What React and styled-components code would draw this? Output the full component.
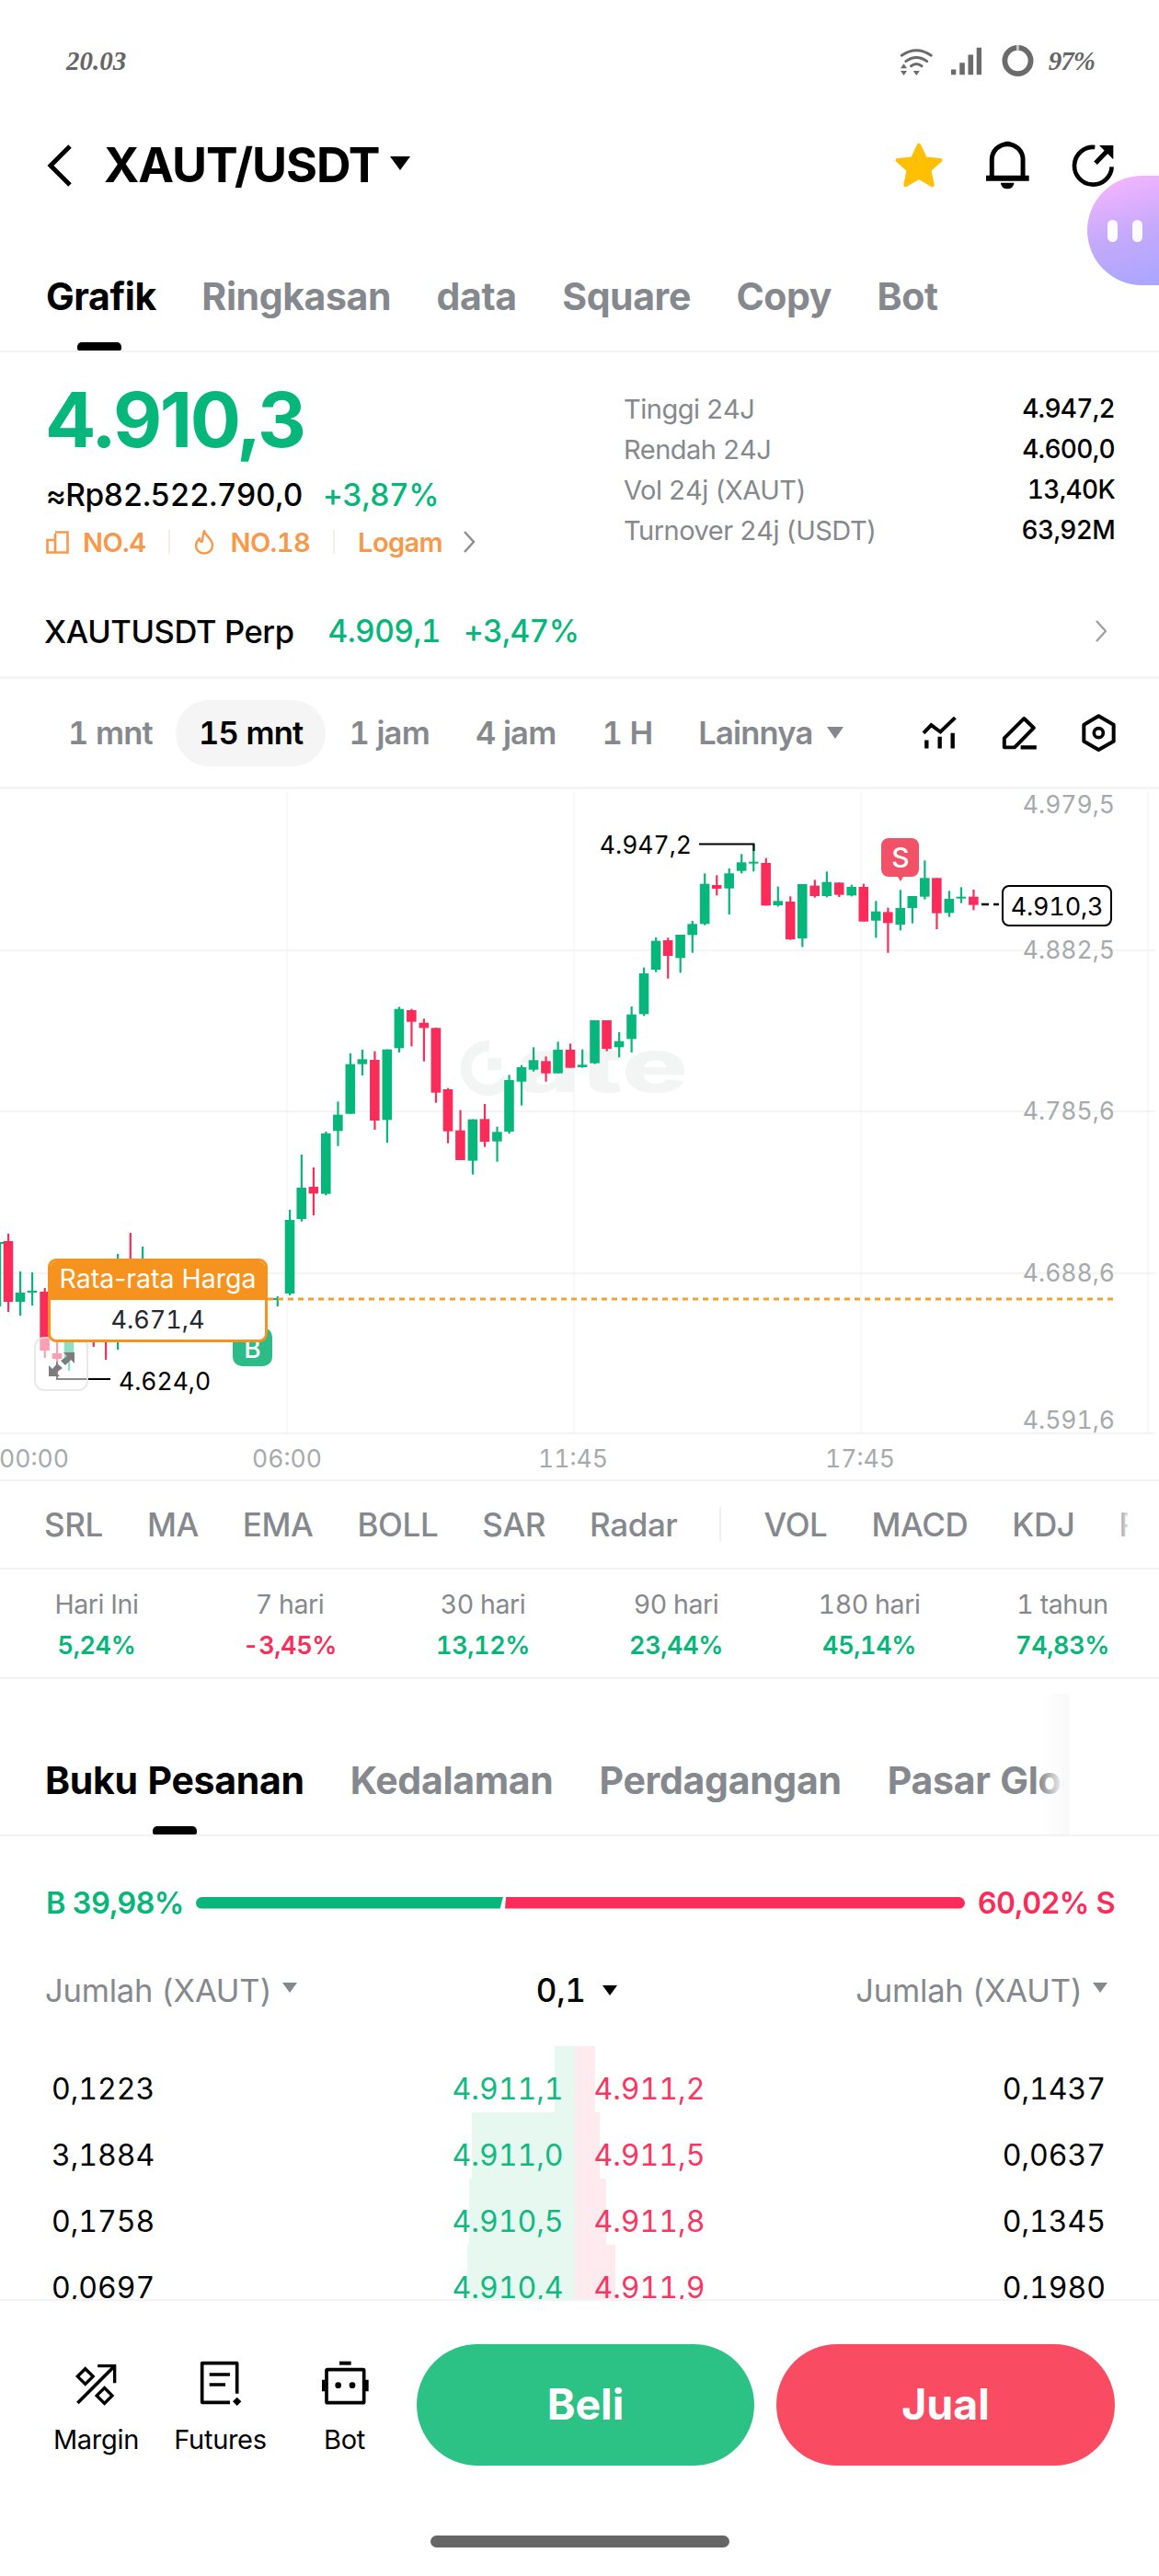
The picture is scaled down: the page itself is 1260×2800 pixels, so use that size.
import React from "react";
import styled, { createGlobalStyle } from "styled-components";

const GREEN = "#06b67a";
const RED = "#f92c5a";
const GREY = "#85898d";
const ORANGE = "#f7994b";

const Global = createGlobalStyle`
  html, body { margin: 0; padding: 0; background: #fff; }
  * { box-sizing: border-box; }
  body { font-family: Inter, "Liberation Sans", sans-serif; color: #000; font-variant-numeric: tabular-nums; }
`;

const Page = styled.div`
  position: relative;
  width: 1260px;
  height: 2800px;
  overflow: hidden;
  background: #fff;
`;

/* status bar */
const StatusBar = styled.div`
  height: 132px;
  padding: 0 72px;
  display: flex;
  align-items: center;
  justify-content: space-between;
  font-family: "Liberation Serif", serif;
  font-style: italic;
  font-weight: 700;
  font-size: 29px;
  color: #666;
`;
const StatusIcons = styled.div`
  display: flex;
  align-items: center;
  width: 212px;
  margin-right: -2px;
  span { margin-left: 16px; letter-spacing: -1px; }
`;

/* header */
const Header = styled.div`
  height: 96px;
  display: flex;
  align-items: center;
  padding: 0 48px 0 50px;
`;
const Title = styled.div`
  margin-left: 33px;
  font-size: 52px;
  font-weight: 700;
  letter-spacing: -1.1px;
  line-height: 60px;
`;
const HeaderIcons = styled.div`
  margin-left: auto;
  margin-top: -2px;
  display: flex;
  align-items: center;
  gap: 45px;
`;
const Bubble = styled.div`
  position: absolute;
  right: 0;
  top: 191px;
  width: 78px;
  height: 119px;
  border-radius: 60px 0 0 60px;
  background: linear-gradient(165deg, #fbb7ff 0%, #c4a9fb 55%, #a9a6ff 100%);
  display: flex;
  align-items: center;
  gap: 16px;
  padding-left: 22px;
  i { display: block; width: 11px; height: 24px; border-radius: 6px; background: #fff; opacity: .95; }
`;

/* tabs */
const TabBar = styled.div`
  position: relative;
  height: ${p => p.$h}px;
  padding: ${p => p.$top}px 0 0 ${p => p.$left}px;
  display: flex;
  gap: ${p => p.$gap}px;
  border-bottom: 2px solid #f2f2f2;
  font-weight: 700;
  font-size: ${p => p.$size}px;
  letter-spacing: ${p => p.$ls}px;
  line-height: 48px;
  color: ${GREY};
  white-space: nowrap;
  overflow: hidden;
`;
const TabItem = styled.div`
  color: ${p => (p.$active ? "#000" : GREY)};
`;
const TabMark = styled.div`
  position: absolute;
  left: ${p => p.$left}px;
  bottom: 0;
  width: 48px;
  height: 9px;
  border-radius: 5px 5px 2px 2px;
  background: #000;
`;
const TabFade = styled.div`
  position: absolute;
  left: 1130px;
  top: 16px;
  bottom: 0;
  width: 130px;
  background: linear-gradient(90deg, rgba(250,250,250,0) 0, #fafafa 27px, #f9f9f9 32px, #fff 33px);
`;

/* summary */
const Summary = styled.div`
  height: 257px;
  padding: 0 48px 0 50px;
  display: flex;
  justify-content: space-between;
`;
const LeftCol = styled.div`
  display: flex;
  flex-direction: column;
`;
const BigPrice = styled.div`
  margin: 29px 0 0 -1px;
  font-size: 82px;
  line-height: 90px;
  font-weight: 700;
  letter-spacing: -2.5px;
  font-variant-numeric: normal;
  color: ${GREEN};
`;
const FiatRow = styled.div`
  margin-top: 14px;
  display: flex;
  gap: 22px;
  font-size: 33.5px;
  line-height: 44px;
  font-weight: 500;
  letter-spacing: -.5px;
`;
const Up = styled.span`
  color: ${GREEN};
`;
const RankRow = styled.div`
  margin-top: 9px;
  display: flex;
  align-items: center;
  height: 40px;
  font-size: 29px;
  font-weight: 600;
  letter-spacing: -.6px;
  color: ${ORANGE};
`;
const RankSep = styled.i`
  width: 2px;
  height: 26px;
  margin: 0 25px;
  background: #f6eee6;
`;
const RankLabel = styled.span`
  display: flex;
  margin-left: ${p => p.$ml || 0}px;
`;
const StatsCol = styled.div`
  width: 534px;
  padding-top: 39px;
`;
const StatRow = styled.div`
  height: 44px;
  display: flex;
  justify-content: space-between;
  align-items: center;
  font-size: 29px;
  letter-spacing: -.5px;
  color: ${GREY};
  b { font-weight: 500; color: #000; font-size: 28px; letter-spacing: -.7px; }
`;

const PerpRow = styled.div`
  height: 98px;
  padding: 0 56px 3px 48px;
  display: flex;
  align-items: center;
  border-bottom: 3px solid #f4f4f4;
  font-size: 33.5px;
  font-weight: 500;
  letter-spacing: -.6px;
`;
const PerpName = styled.span`
  font-size: 34.5px;
  letter-spacing: -.4px;
`;
const PerpPrice = styled.span`
  margin-left: ${p => p.$ml}px;
  color: ${GREEN};
`;
const PushRight = styled.div`
  margin-left: auto;
  display: flex;
`;

/* intervals */
const IntervalRow = styled.div`
  height: 120px;
  padding: 0 47px 0 49px;
  display: flex;
  align-items: center;
  border-bottom: 3px solid #f4f4f4;
  font-size: 34.5px;
  font-weight: 600;
  letter-spacing: -.8px;
  color: ${GREY};
`;
const Interval = styled.div`
  height: 72px;
  padding: 0 25px;
  line-height: 72px;
  border-radius: 36px;
  white-space: nowrap;
  background: ${p => (p.$active ? "#f5f5f5" : "transparent")};
  color: ${p => (p.$active ? "#000" : "inherit")};
`;
const Caret = styled.i`
  display: inline-block;
  width: 0;
  height: 0;
  margin-left: ${p => p.$ml}px;
  border-left: ${p => p.$s}px solid transparent;
  border-right: ${p => p.$s}px solid transparent;
  border-top: ${p => p.$s * 1.45}px solid ${p => p.$c};
  vertical-align: middle;
  position: relative;
  top: -3px;
`;
const ToolIcons = styled.div`
  margin-left: auto;
  display: flex;
  align-items: center;
  gap: 49px;
`;

/* chart */
const ChartWrap = styled.div`
  position: relative;
  height: 752px;
  border-bottom: 2px solid #f2f2f2;
  svg { display: block; }
`;
const AvgBox = styled.div`
  position: absolute;
  left: 52px;
  top: 510px;
  width: 239px;
  height: 91px;
  border: 3px solid #f6931e;
  border-radius: 9px;
  background: #fff;
  overflow: hidden;
  text-align: center;
`;
const AvgHead = styled.div`
  height: 43px;
  margin: -1px -1px 0;
  background: #f6931e;
  color: #fff;
  font-size: 28.5px;
  line-height: 40px;
  white-space: nowrap;
  font-variant-numeric: normal;
`;
const AvgVal = styled.div`
  font-size: 27px;
  line-height: 44px;
  color: #24292f;
`;
const BuyMark = styled.div`
  position: absolute;
  left: 253px;
  top: 585px;
  width: 43px;
  height: 42px;
  border-radius: 10px;
  background: #2dbb87;
  color: #fff;
  font-size: 28px;
  font-weight: 500;
  text-align: center;
  line-height: 46px;
`;
const ExpandBtn = styled.div`
  position: absolute;
  left: 37px;
  top: 595px;
  width: 59px;
  height: 59px;
  border: 2px solid rgba(225,225,225,.75);
  border-radius: 11px;
  background: rgba(255,255,255,.55);
  display: flex;
  align-items: center;
  justify-content: center;
`;
const NowBox = styled.div`
  position: absolute;
  left: 1089px;
  top: 104px;
  width: 120px;
  height: 45px;
  border: 2px solid #000;
  border-radius: 8px;
  background: #fff;
  font-size: 27px;
  letter-spacing: -.2px;
  line-height: 43px;
  text-align: center;
`;

/* indicators */
const IndicatorRow = styled.div`
  position: relative;
  height: 96px;
  padding-left: 48px;
  display: flex;
  align-items: center;
  gap: 48px;
  border-bottom: 2px solid #f2f2f2;
  font-size: 35px;
  font-weight: 500;
  letter-spacing: -.4px;
  color: ${GREY};
  white-space: nowrap;
  overflow: hidden;
  span { flex: none; }
`;
const IndicatorSep = styled.i`
  flex: 0 0 2px;
  height: 38px;
  margin: 0 -1px 0 -3px;
  background: #f0f0f0;
`;
const IndicatorFade = styled.div`
  position: absolute;
  left: 1226px;
  right: 0;
  top: 0;
  bottom: 0;
  background: #fff;
  box-shadow: -6px 0 6px rgba(255,255,255,.7);
`;

/* performance */
const PerfGrid = styled.div`
  height: 119px;
  display: grid;
  grid-template-columns: repeat(6, 210px);
  border-bottom: 2px solid #f2f2f2;
  padding-top: 20px;
  text-align: center;
`;
const PerfLabel = styled.div`
  font-size: 28.5px;
  line-height: 36px;
  color: ${GREY};
  letter-spacing: -.4px;
`;
const PerfValue = styled.div`
  margin-top: 9px;
  font-size: 27px;
  line-height: 36px;
  font-weight: 600;
  letter-spacing: -.4px;
  color: ${p => (p.$down ? RED : GREEN)};
`;

/* book */
const RatioRow = styled.div`
  height: 72px;
  margin-top: 36px;
  padding: 0 48px 0 50px;
  display: flex;
  align-items: center;
  font-size: 32.5px;
  font-weight: 600;
  letter-spacing: -.75px;
`;
const RatioSide = styled.span`
  flex: 0 0 150px;
  color: ${p => p.$c};
  white-space: nowrap;
  text-align: ${p => p.$align};
`;
const RatioBar = styled.div`
  flex: 1;
  height: 13px;
  margin: 0 13px 0 13px;
  display: flex;
  gap: 2px;
`;
const RatioBuy = styled.i`
  flex: 0 0 334px;
  background: ${GREEN};
  border-radius: 7px 0 0 7px;
  clip-path: polygon(0 0, 100% 0, 99% 100%, 0 100%);
`;
const RatioSell = styled.i`
  flex: 1;
  background: ${RED};
  border-radius: 0 7px 7px 0;
  clip-path: polygon(1px 0, 100% 0, 100% 100%, 0 100%);
`;
const BookHead = styled.div`
  height: 46px;
  margin-top: 36px;
  padding: 0 56px 0 49px;
  display: flex;
  align-items: center;
  font-size: 34.5px;
  letter-spacing: -.2px;
  color: ${GREY};
  white-space: nowrap;
`;
const BookMid = styled.span`
  margin-left: 260px;
  margin-right: auto;
  color: #000;
  font-weight: 500;
  font-size: 35px;
`;
const BookBody = styled.div`
  height: 313px;
  padding-top: 48px;
  overflow: hidden;
`;
const BookRow = styled.div`
  position: relative;
  height: 72px;
  padding: 0 58px 0 56px;
  display: flex;
  align-items: center;
  gap: 33px;
  font-size: 32px;
`;
const Depth = styled.i`
  position: absolute;
  top: -10px;
  height: 72px;
  left: ${p => p.$l}px;
  width: ${p => p.$w}px;
  background: ${p => p.$c};
`;
const Half = styled.div`
  position: relative;
  flex: 1;
  display: flex;
  justify-content: space-between;
`;
const Price = styled.span`
  color: ${p => p.$c};
  opacity: .95;
`;

/* footer */
const Footer = styled.div`
  height: 300px;
  border-top: 2px solid #f4f4f4;
  padding-top: 47px;
  display: flex;
  flex-direction: column;
`;
const ActionRow = styled.div`
  padding: 0 48px 0 37px;
  display: flex;
  height: 132px;
`;
const NavItem = styled.div`
  width: 135px;
  padding-top: 17px;
  display: flex;
  flex-direction: column;
  align-items: center;
  font-size: 29px;
  letter-spacing: -.3px;
  svg { display: block; }
`;
const NavIcon = styled.div`
  height: 50px;
  display: flex;
  align-items: flex-end;
`;
const NavLabel = styled.div`
  margin-top: 19px;
  line-height: 36px;
`;
const Action = styled.div`
  width: ${p => p.$w}px;
  margin-left: ${p => p.$ml}px;
  height: 132px;
  border-radius: 66px;
  background: ${p => p.$c};
  color: #fff;
  font-size: 46.5px;
  font-weight: 700;
  text-align: center;
  line-height: 130px;
`;
const HomeBar = styled.div`
  align-self: center;
  width: 325px;
  height: 13px;
  margin-top: 76px;
  border-radius: 7px;
  background: #666;
`;

/* icons, drawn in the coordinates of the reference crop */
const Ic = ({ w, h, box, children, style }) => (
  <svg width={w} height={h} viewBox={box} fill="none" style={style}>{children}</svg>
);

const StatusGlyphs = () => (
  <>
    <Ic w={37} h={32} box="112 58 110 100">
      <g stroke="#6b6b6b" strokeWidth="9" strokeLinecap="round">
        <path d="M118 90 Q168 56 218 90" />
        <path d="M132 110 Q168 84 204 110" />
        <path d="M150 126 Q168 112 186 126" />
      </g>
      <path d="M114 134H136L125 118ZM114 142H136L125 158ZM157 142H179L168 158Z" fill="#6b6b6b" />
    </Ic>
    <Ic w={34} h={31} box="280 66 100 94" style={{ marginLeft: 20 }}>
      <path d="M280 140h16v18h-16zM308 118h17v40h-17zM336 92h17v66h-17zM364 68h16v90h-16z" fill="#6b6b6b" />
    </Ic>
    <Ic w={36} h={36} box="0 0 36 36" style={{ marginLeft: 22 }}>
      <circle cx="18" cy="18" r="14.5" stroke="#6b6b6b" strokeWidth="6" />
      <path d="M16.4 0.5h3v6h-3z" fill="#c8c8c8" />
    </Ic>
  </>
);

const Back = () => (
  <Ic w={30} h={48} box="0 0 30 48">
    <path d="M26 3 L5 24 L26 45" stroke="#000" strokeWidth="5" strokeLinecap="butt" />
  </Ic>
);
const Star = () => (
  <Ic w={54} h={51} box="30 68 160 154">
    <path d="M110 80 L131 124 L180 129 L144 161 L154 210 L110 185 L66 210 L76 161 L40 129 L89 124Z" fill="#febf05" stroke="#febf05" strokeWidth="13" strokeLinejoin="round" />
  </Ic>
);
const Bell = () => (
  <Ic w={49} h={53} box="326 66 146 160">
    <path d="M347 188 V128 a51 51 0 0 1 102 0 V188" stroke="#000" strokeWidth="15" />
    <path d="M328 189H469" stroke="#000" strokeWidth="18" />
    <rect x="388" y="68" width="21" height="14" rx="6" fill="#000" />
    <path d="M376 204 h44 a22 20 0 0 1 -44 0Z" fill="#000" />
  </Ic>
);
const Share = () => (
  <Ic w={47} h={47} box="616 80 141 141">
    <path d="M692 92 A61 61 0 1 0 747 156" stroke="#000" strokeWidth="14" />
    <path d="M694 144 L738 98" stroke="#000" strokeWidth="15" />
    <path d="M706 86 H752 V132 Z" fill="#000" />
  </Ic>
);
const ChartTool = () => (
  <Ic w={38} h={37} box="124 54 114 110">
    <path d="M130 110 L155 84 L185 106 L233 60" stroke="#000" strokeWidth="12" />
    <path d="M140 133V160M183 122V160M225 110V160" stroke="#000" strokeWidth="13" />
  </Ic>
);
const PenTool = () => (
  <Ic w={38} h={37} box="386 50 114 112">
    <path d="M394 124 L459 59 L491 90 L428 154 H394Z" stroke="#000" strokeWidth="12" strokeLinejoin="round" />
    <path d="M448 154H500" stroke="#000" strokeWidth="13" />
  </Ic>
);
const HexTool = () => (
  <Ic w={37} h={41} box="648 50 111 123">
    <path d="M703 57 L752 85 V139 L703 167 L655 139 V85Z" stroke="#000" strokeWidth="12" strokeLinejoin="round" />
    <circle cx="703" cy="112" r="15" stroke="#000" strokeWidth="11" />
  </Ic>
);
const Chevron = ({ c, w, h, sw }) => (
  <Ic w={w} h={h} box="0 0 14 24">
    <path d="M2 1 L12 12 L2 23" stroke={c} strokeWidth={sw} />
  </Ic>
);
const RankIcon = () => (
  <Ic w={25} h={25} box="0 0 25 25">
    <path d="M1.5 10H10V23.5H1.5ZM10 3V23.5H23.5V1.5H10" stroke={ORANGE} strokeWidth="2.6" />
  </Ic>
);
const Flame = () => (
  <Ic w={24} h={28} box="0 0 24 28">
    <path d="M12 2 C13 8 21 10 21 18 A9 8.5 0 0 1 3 18 C3 14 5 12 7 10 C7 13 8 14 9.5 14 C11 10 10 6 12 2Z" stroke={ORANGE} strokeWidth="2.4" strokeLinejoin="round" />
  </Ic>
);
const MarginIcon = () => (
  <Ic w={47} h={47} box="235 260 140 140">
    <path d="M245 391 L364 272" stroke="#000" strokeWidth="11" />
    <path d="M310 271 H365 V326" stroke="#000" strokeWidth="10" />
    <path d="M270 280 L295 305 L270 330 L245 305Z M332 342 L357 367 L332 392 L307 367Z" stroke="#000" strokeWidth="10" />
  </Ic>
);
const FuturesIcon = () => (
  <Ic w={50} h={50} box="640 252 150 150">
    <path d="M768 362 V263 H654 V391 H745" stroke="#000" strokeWidth="11" strokeLinejoin="round" />
    <path d="M678 300H745M678 333H730" stroke="#000" strokeWidth="11" />
    <path d="M768 374 L782 388 L768 402 L754 388Z" fill="#000" />
  </Ic>
);
const BotIcon = () => (
  <Ic w={52} h={50} box="1040 252 156 150">
    <rect x="1058" y="284" width="122" height="108" rx="3" stroke="#000" strokeWidth="11" />
    <path d="M1100 263H1138" stroke="#000" strokeWidth="12" />
    <path d="M1043 317h11v38h-11zM1184 317h11v38h-11z" fill="#000" />
    <circle cx="1096" cy="335" r="10" fill="#000" />
    <circle cx="1142" cy="335" r="10" fill="#000" />
  </Ic>
);
const ExpandIcon = () => (
  <Ic w={34} h={34} box="0 0 34 34">
    <path d="M19 4H31V16L27 12L21 18L16 13L23 8ZM15 30H3V18L7 22L12 16L18 21L11 26Z" fill="#7c7c7c" />
  </Ic>
);

/* chart data: [x, wick top, body top, body bottom, wick bottom, up] as read from the reference */
const crop3 = [
  [803,1185,1293,1395,1403,1],[835,1227,1290,1312,1383,0],[868,1110,1116,1313,1318,1],[900,1012,1055,1108,1157,1],
  [933,855,890,1052,1052,1],[965,843,874,890,927,1],[998,848,876,1074,1104,0],[1031,842,842,1072,1146,1],
  [1063,703,710,838,852,1],[1096,710,714,752,832,0],[1129,742,755,772,881,0],[1161,772,772,983,1016,0],
  [1193,968,972,1109,1148,0],[1226,1040,1106,1203,1203,0],[1259,1070,1070,1205,1250,1],[1291,1020,1069,1143,1160,0],
  [1324,1094,1111,1142,1208,1],[1356,925,942,1110,1117,1],[1389,893,900,947,1025,1],[1421,835,877,908,914,1],
  [1454,865,880,920,947,0],[1486,817,843,920,920,1],[1519,823,843,902,902,0],[1551,842,892,900,902,1],
];
const crop4 = [
  [65,747,747,887,890,1],[97,747,747,840,848,0],[130,786,815,835,868,1],[163,702,728,808,852,1],
  [196,575,594,727,733,1],[228,477,488,582,590,1],[260,478,486,537,611,0],[293,468,468,544,592,1],
  [325,423,433,469,527,1],[358,268,302,433,437,1],[390,274,306,318,340,0],[423,252,268,317,402,1],
  [456,205,232,260,268,1],[488,172,230,235,262,1],[521,218,234,373,373,0],[553,311,358,372,376,1],
  [586,343,360,483,485,0],[618,303,303,480,508,1],[651,289,308,342,347,0],[683,262,296,342,346,1],
  [716,298,298,338,345,0],[749,305,312,340,343,1],[781,302,312,425,425,0],[814,358,392,422,478,1],
  [846,380,394,430,527,0],[879,322,381,435,454,1],[911,342,342,381,431,1],[944,226,283,344,353,1],
  [976,283,283,398,450,0],[1009,325,351,397,410,1],[1041,313,344,349,365,1],[1074,321,344,371,388,0],
];
const left = [
  [0,1350,1350,1350,1420,1],[9,1341,1349,1415,1426,0],[22,1382,1405,1415,1430,1],[35,1383,1403,1405,1419,1],
  [48.6,1400,1404,1468,1476,0],[62,1440,1471,1477,1499,0],[75,1440,1450,1477,1490,1],[101.7,1420,1430,1440,1464,0],
  [115,1420,1430,1445,1478,0],[128,1363,1380,1440,1467,1],[141.7,1340,1380,1400,1420,0],[155,1355,1380,1400,1420,1],
  [301.7,1409,1411,1413,1420,1],[315,1315,1326,1406,1408,1],
];
const candles = [
  ...left,
  ...crop3.map(([x, a, b, c, d, u]) => [x / 2.45, 860 + a / 3, 860 + b / 3, 860 + c / 3, 860 + d / 3, u]),
  ...crop4.map(([x, a, b, c, d, u]) => [620 + x / 2.45, 860 + a / 3, 860 + b / 3, 860 + c / 3, 860 + d / 3, u]),
];

const AxisText = styled.text`
  font-family: Inter, "Liberation Sans", sans-serif;
  font-size: 26.5px;
  fill: ${p => p.$c};
  font-variant-numeric: tabular-nums;
  dominant-baseline: central;
`;
const BadgeText = styled.text`
  font-family: Inter, "Liberation Sans", sans-serif;
  font-size: 30px;
  font-weight: 500;
  fill: #fff;
  dominant-baseline: central;
`;
const Watermark = styled.text`
  font-family: Inter, "Liberation Sans", sans-serif;
  font-size: 82px;
  font-weight: 800;
  fill: #f3f4f4;
`;

const Chart = () => (
  <ChartWrap>
    <svg width="1260" height="750" viewBox="0 858 1260 750">
      {[312, 624, 936, 1248].map(x => <path key={x} d={`M${x} 861V1558`} stroke="#f8f8f8" strokeWidth="2" />)}
      {[1033, 1208, 1384, 1558].map(y => <path key={y} d={`M0 ${y}H1256`} stroke="#f4f4f4" strokeWidth="2" />)}
      <g>
        <path d="M532 1137 A24 24 0 1 0 552 1172" stroke="#f3f4f4" strokeWidth="12" fill="none" />
        <path d="M530 1150h15v13h-15z" fill="#f3f4f4" />
        <Watermark x="560" y="1187" textLength="188" lengthAdjust="spacingAndGlyphs">ate</Watermark>
      </g>
      {candles.map(([x, a, b, c, d, u], i) => (
        <g key={i} fill={u ? GREEN : RED}>
          <rect x={x - 1} y={a} width="2.2" height={d - a} />
          <rect x={x - 5.3} y={b} width="10.6" height={Math.max(c - b, 2)} />
        </g>
      ))}
      <path d="M291 1412H1212" stroke="#f3a033" strokeWidth="3" strokeDasharray="6 5" />
      <path d="M760 917.5H819.5V925" stroke="#000" strokeWidth="2" fill="none" />
      <path d="M62 1480V1499H120" stroke="#000" strokeWidth="2" fill="none" />
      <path d="M1067 983H1075M1080 983H1086" stroke="#000" strokeWidth="2.4" />
      <path d="M966 911h25a8 8 0 0 1 8 8v26a8 8 0 0 1 -8 8h-9l-3 5l-3 -5h-10a8 8 0 0 1 -8 -8v-26a8 8 0 0 1 8 -8Z" fill="#f25267" />
      <BadgeText x="979" y="932" textAnchor="middle">S</BadgeText>
      <AxisText x="752" y="918" $c="#000" textAnchor="end">4.947,2</AxisText>
      <AxisText x="129" y="1501" $c="#000">4.624,0</AxisText>
      {[["4.979,5", 874], ["4.882,5", 1032], ["4.785,6", 1207], ["4.688,6", 1383], ["4.591,6", 1543]].map(([t, y]) => (
        <AxisText key={t} x="1212" y={y} $c="#a6aaad" textAnchor="end">{t}</AxisText>
      ))}
      {[["00:00", 37], ["06:00", 312], ["11:45", 623], ["17:45", 935]].map(([t, x]) => (
        <AxisText key={t} x={x} y="1585" $c="#a6aaad" textAnchor="middle">{t}</AxisText>
      ))}
    </svg>
    <BuyMark>B</BuyMark>
    <ExpandBtn><ExpandIcon /></ExpandBtn>
    <AvgBox>
      <AvgHead>Rata-rata Harga</AvgHead>
      <AvgVal>4.671,4</AvgVal>
    </AvgBox>
    <NowBox>4.910,3</NowBox>
  </ChartWrap>
);

const stats = [["Tinggi 24J", "4.947,2"], ["Rendah 24J", "4.600,0"], ["Vol 24j (XAUT)", "13,40K"], ["Turnover 24j (USDT)", "63,92M"]];
const perf = [["Hari Ini", "5,24%"], ["7 hari", "-3,45%", 1], ["30 hari", "13,12%"], ["90 hari", "23,44%"], ["180 hari", "45,14%"], ["1 tahun", "74,83%"]];
const book = [
  ["0,1223", "4.911,1", "4.911,2", "0,1437", 603, 647],
  ["3,1884", "4.911,0", "4.911,5", "0,0637", 513, 652],
  ["0,1758", "4.910,5", "4.911,8", "0,1345", 510, 659],
  ["0,0697", "4.910,4", "4.911,9", "0,1980", 508, 669],
];

export default function App() {
  return (
    <Page>
      <Global />
      <StatusBar>
        <span>20.03</span>
        <StatusIcons><StatusGlyphs /><span>97%</span></StatusIcons>
      </StatusBar>
      <Header>
        <Back />
        <Title>XAUT/USDT</Title>
        <Caret $s={11} $c="#000" $ml={12} />
        <HeaderIcons><Star /><Bell /><Share /></HeaderIcons>
      </Header>
      <Bubble><i /><i /></Bubble>

      <TabBar $h={155} $top={70} $left={50} $gap={49.5} $size={41} $ls={-.4}>
        <TabItem $active>Grafik</TabItem>
        <TabItem>Ringkasan</TabItem>
        <TabItem>data</TabItem>
        <TabItem>Square</TabItem>
        <TabItem>Copy</TabItem>
        <TabItem>Bot</TabItem>
        <TabMark $left={84} />
      </TabBar>

      <Summary>
        <LeftCol>
          <BigPrice>4.910,3</BigPrice>
          <FiatRow><span>≈Rp82.522.790,0</span><Up>+3,87%</Up></FiatRow>
          <RankRow>
            <RankIcon /><RankLabel $ml={15}>NO.4</RankLabel>
            <RankSep />
            <Flame /><RankLabel $ml={16}>NO.18</RankLabel>
            <RankSep />
            <RankLabel>Logam</RankLabel>
            <RankLabel $ml={22}><Chevron c="#8b8f93" w={14} h={24} sw={2.4} /></RankLabel>
          </RankRow>
        </LeftCol>
        <StatsCol>
          {stats.map(([k, v]) => <StatRow key={k}><span>{k}</span><b>{v}</b></StatRow>)}
        </StatsCol>
      </Summary>

      <PerpRow>
        <PerpName>XAUTUSDT Perp</PerpName>
        <PerpPrice $ml={37}>4.909,1</PerpPrice>
        <PerpPrice $ml={25}>+3,47%</PerpPrice>
        <PushRight><Chevron c="#9a9ea2" w={14} h={24} sw={2.2} /></PushRight>
      </PerpRow>

      <IntervalRow>
        <Interval>1 mnt</Interval>
        <Interval $active>15 mnt</Interval>
        <Interval>1 jam</Interval>
        <Interval>4 jam</Interval>
        <Interval>1 H</Interval>
        <Interval>Lainnya<Caret $s={9} $c={GREY} $ml={15} /></Interval>
        <ToolIcons><ChartTool /><PenTool /><HexTool /></ToolIcons>
      </IntervalRow>

      <Chart />

      <IndicatorRow>
        <span>SRL</span><span>MA</span><span>EMA</span><span>BOLL</span><span>SAR</span><span>Radar</span>
        <IndicatorSep />
        <span>VOL</span><span>MACD</span><span>KDJ</span><span>RSI</span>
        <IndicatorFade />
      </IndicatorRow>

      <PerfGrid>
        {perf.map(([k, v, d]) => (
          <div key={k}><PerfLabel>{k}</PerfLabel><PerfValue $down={d}>{v}</PerfValue></div>
        ))}
      </PerfGrid>

      <TabBar $h={171} $top={86} $left={49} $gap={50} $size={41} $ls={-.3}>
        <TabItem $active>Buku Pesanan</TabItem>
        <TabItem>Kedalaman</TabItem>
        <TabItem>Perdagangan</TabItem>
        <TabItem>Pasar Global</TabItem>
        <TabFade />
        <TabMark $left={166} />
      </TabBar>

      <RatioRow>
        <RatioSide $c={GREEN} $align="left">B 39,98%</RatioSide>
        <RatioBar><RatioBuy /><RatioSell /></RatioBar>
        <RatioSide $c={RED} $align="right">60,02% S</RatioSide>
      </RatioRow>

      <BookHead>
        <span>Jumlah (XAUT)</span><Caret $s={8} $c={GREY} $ml={11} />
        <BookMid>0,1<Caret $s={8} $c="#000" $ml={18} /></BookMid>
        <span>Jumlah (XAUT)</span><Caret $s={8} $c={GREY} $ml={11} />
      </BookHead>

      <BookBody>
        {book.map(([a, b, c, d, gl, rr]) => (
          <BookRow key={a}>
            <Depth $l={gl} $w={625 - gl} $c="#e7f8f1" />
            <Depth $l={625} $w={rr - 625} $c="#fdebf0" />
            <Half><span>{a}</span><Price $c={GREEN}>{b}</Price></Half>
            <Half><Price $c={RED}>{c}</Price><span>{d}</span></Half>
          </BookRow>
        ))}
      </BookBody>

      <Footer>
        <ActionRow>
          <NavItem><NavIcon><MarginIcon /></NavIcon><NavLabel>Margin</NavLabel></NavItem>
          <NavItem><NavIcon><FuturesIcon /></NavIcon><NavLabel>Futures</NavLabel></NavItem>
          <NavItem><NavIcon><BotIcon /></NavIcon><NavLabel>Bot</NavLabel></NavItem>
          <Action $w={367} $ml={11} $c="#2cc185">Beli</Action>
          <Action $w={368} $ml={24} $c="#f94b62">Jual</Action>
        </ActionRow>
        <HomeBar />
      </Footer>
    </Page>
  );
}
